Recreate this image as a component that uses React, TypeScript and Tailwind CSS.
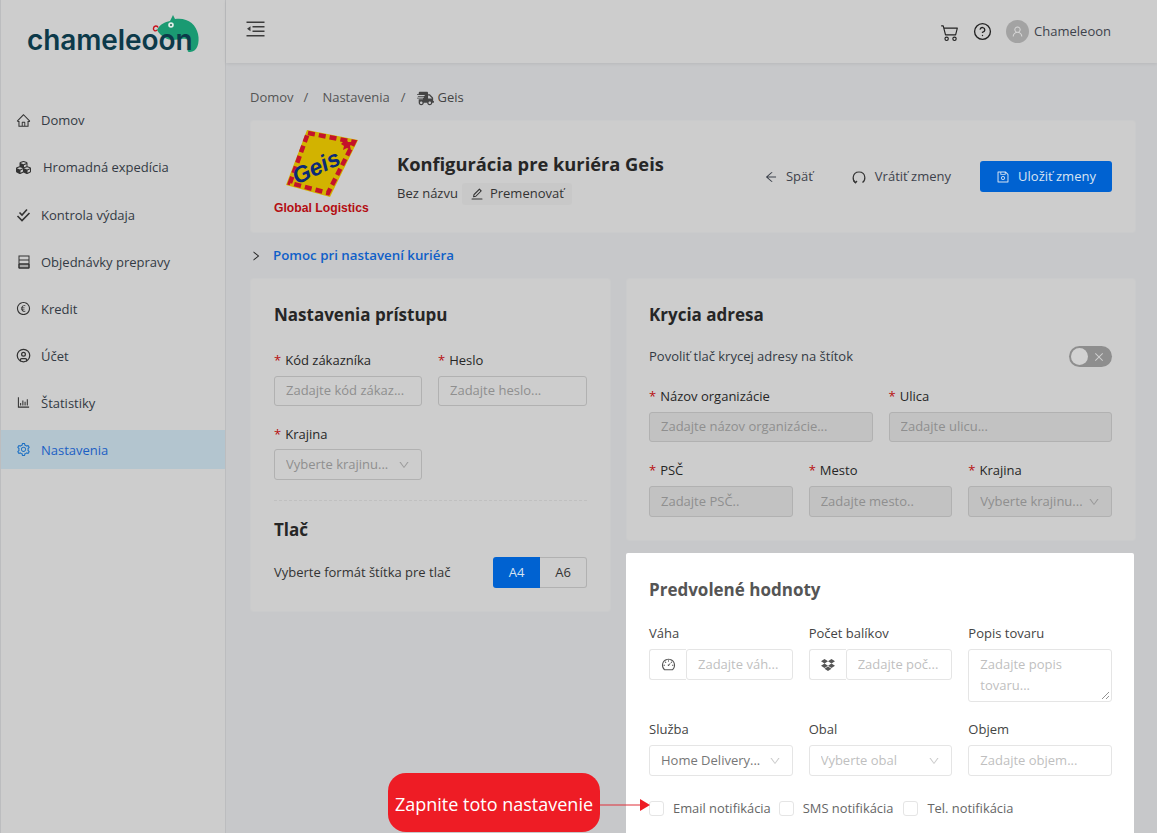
import type { ReactNode } from "react";
import {
  AiOutlineArrowLeft,
  AiOutlineBarChart,
  AiOutlineClose,
  AiOutlineDashboard,
  AiOutlineDown,
  AiOutlineEdit,
  AiOutlineEuroCircle,
  AiOutlineHome,
  AiOutlineRight,
  AiOutlineSave,
  AiOutlineSetting,
  AiOutlineUser,
} from "react-icons/ai";
import { BsCart2 } from "react-icons/bs";
import { FaCubes, FaDropbox, FaShippingFast } from "react-icons/fa";
import { LuCircleHelp, LuCircleUser } from "react-icons/lu";

function OrdersIcon() {
  return (
    <svg width="14" height="14" viewBox="0 0 14 14" fill="none" stroke="currentColor" strokeWidth="1">
      <rect x="2" y="1" width="10" height="12" />
      <path d="M2 5h10M2 9h10" />
      <path d="M2 9h10v4H2z" fill="currentColor" fillOpacity="0.25" />
    </svg>
  );
}

function ChecksIcon() {
  return (
    <svg width="15" height="14" viewBox="0 0 15 14" fill="none" stroke="currentColor" strokeWidth="1.6">
      <path d="M3.5 4.5L6 7L11 1.5" />
      <path d="M1.5 8L6 12.5L13.5 5" />
    </svg>
  );
}

const navItems: { label: string; icon: ReactNode; active?: boolean; cls: string }[] = [
  { label: "Domov", icon: <AiOutlineHome size={15} />, cls: "pt-px" },
  { label: "Hromadná expedícia", icon: <FaCubes size={17} />, cls: "ml-[2px] pt-px" },
  { label: "Kontrola výdaja", icon: <ChecksIcon />, cls: "pt-[2px]" },
  { label: "Objednávky prepravy", icon: <OrdersIcon />, cls: "pt-[2px]" },
  { label: "Kredit", icon: <AiOutlineEuroCircle size={15} />, cls: "pt-[2px]" },
  { label: "Účet", icon: <LuCircleUser size={15} />, cls: "pt-[2px]" },
  { label: "Štatistiky", icon: <AiOutlineBarChart size={15} />, cls: "pt-[2px]" },
  { label: "Nastavenia", icon: <AiOutlineSetting size={15} />, active: true, cls: "pt-[2px]" },
];

function Logo() {
  return (
    <div className="relative ml-[26px] mt-[22px] h-[36px] w-[180px]">
      <svg className="absolute left-[122px] top-[-8px]" width="54" height="42" viewBox="0 0 54 42">
        <path
          d="M8 16C11 10 16 8 21 7L24 1L26 5C38 3 47 10 49 20C51 29 48 38 41 38C38 38 38 36 40 34C42 31 42 27 37 25C32 24 29 26 24 26C19 26 12 23 8 16Z"
          fill="#1a9a72"
        />
        <circle cx="22" cy="11" r="2.8" fill="#dfeee8" />
        <circle cx="22" cy="11" r="1" fill="#1a6a52" />
        <path d="M8 16C6 18 4 16 4.5 14C5 11.5 8.5 11.5 9 13.5" fill="none" stroke="#c8101a" strokeWidth="1.4" />
      </svg>
      <span className="relative block font-['Inter',sans-serif] text-[28px] leading-[36px] font-semibold tracking-[-0.1px] text-[#0c3a4a]">
        chameleoon
      </span>
    </div>
  );
}

function Sidebar() {
  return (
    <aside className="flex h-full w-[226px] shrink-0 flex-col border-x border-[#bcbdbf] bg-[#cdcdcd]">
      <Logo />
      <nav className="mt-[43px] flex flex-col gap-2">
        {navItems.map((item) => (
          <div
            key={item.label}
            className={
              item.active
                ? "flex h-[39px] items-center gap-[10px] bg-[#b3c5cf] pl-[15px] text-[#1b5fc4]"
                : "flex h-[39px] items-center gap-[10px] pl-[15px] text-[#333a44]"
            }
          >
            <span className={item.active ? "flex w-[15px] justify-center text-[#1b6fc4]" : "flex w-[15px] justify-center text-[#333]"}>
              {item.icon}
            </span>
            <span className={`text-[13px] ${item.cls}`}>{item.label}</span>
          </div>
        ))}
      </nav>
    </aside>
  );
}

function Header() {
  return (
    <header className="flex h-[63px] shrink-0 items-start justify-between bg-[#cdcdcd] pl-5 pr-[46px] shadow-[0_1px_3px_rgba(0,0,0,0.08)]">
      <svg className="mt-[21px]" width="19" height="16" viewBox="0 0 19 16" fill="#3c3c3c">
        <path d="M0.5 0.5h18v1.5h-18zM6.5 5h12v1.5h-12zM6.5 9.5h12V11h-12zM0.5 14h18v1.5h-18zM4.5 5.2v5L1 7.7z" />
      </svg>
      <div className="mt-[20px] flex items-center text-[#222]">
        <BsCart2 size={18} className="mr-[14px]" />
        <LuCircleHelp size={19} strokeWidth={1.7} className="mr-[14px]" />
        <span className="mr-[5px] flex h-[23px] w-[23px] items-center justify-center rounded-full bg-[#a3a3a3] text-[#d8d8d8]">
          <AiOutlineUser size={13} />
        </span>
        <span className="text-[13px] text-[#3d424c]">Chameleoon</span>
      </div>
    </header>
  );
}

function GeisLogo() {
  return (
    <svg className="mb-2" width="105" height="95" viewBox="0 0 105 95">
      <polygon points="37,5 88,15 60,72 16,60" fill="#d2b300" />
      <polygon
        points="38,8 84,17 58,68 20,58"
        fill="none"
        stroke="#c4122a"
        strokeWidth="4.5"
        strokeDasharray="7 4"
      />
      <path d="M73 17l3-3 2 3 5 0-3 4 1 4-4-2-4 2 1-4-3-2z" fill="#c4122a" />
      <text
        x="46"
        y="50"
        textAnchor="middle"
        transform="rotate(-25 46 42)"
        fontFamily="Liberation Sans, sans-serif"
        fontSize="23"
        fontWeight="700"
        fontStyle="italic"
        fill="#0b2a78"
      >
        Geis
      </text>
      <text x="4" y="87" fontFamily="Liberation Sans, sans-serif" fontSize="12.2" fontWeight="700" fill="#b40d12">
        Global Logistics
      </text>
    </svg>
  );
}

type Tone = "dim" | "disabled" | "white";

const fieldTone: Record<Tone, string> = {
  dim: "border-[#b1b1b1] text-[#8f8f8f]",
  disabled: "border-[#b1b1b1] bg-[#c2c2c2] text-[#8f8f8f]",
  white: "border-[#e5e5e5] bg-white text-[#bfbfbf]",
};

function Label({ text, required, white }: { text: string; required?: boolean; white?: boolean }) {
  return (
    <div className={white ? "flex h-[22px] items-center pt-[2px] text-[13px] text-[#444]" : "flex h-[22px] items-center pt-[2px] text-[13px] text-[#262626]"}>
      {required && <span className="mr-[4px] text-[#b80f0f]">*</span>}
      {text}
    </div>
  );
}

function Field({ text, tone, select, h = "h-[31px]", valueColor }: { text: string; tone: Tone; select?: boolean; h?: string; valueColor?: string }) {
  return (
    <div className={`flex ${h} min-w-0 items-center justify-between rounded-[3px] border px-[11px] text-[13px] ${fieldTone[tone]}`}>
      <span className={`truncate ${valueColor ?? ""}`}>{text}</span>
      {select && <AiOutlineDown size={12} className="ml-1 shrink-0 opacity-80" />}
    </div>
  );
}

function CardTitle({ children, white }: { children: ReactNode; white?: boolean }) {
  return (
    <h2 className={white ? "text-[17px] leading-[26px] font-bold text-[#555]" : "text-[17px] leading-[26px] font-bold text-[#262626]"}>
      {children}
    </h2>
  );
}

function AccessCard() {
  return (
    <section className="rounded-[3px] border border-[#cacbcc] bg-[#cdcdcd] px-[23px] pt-[23px] pb-[23px]">
      <CardTitle>Nastavenia prístupu</CardTitle>
      <div className="mt-[21px] grid grid-cols-[148px_149px] gap-x-4">
        <div>
          <Label text="Kód zákazníka" required />
          <div className="mt-[5px]">
            <Field text="Zadajte kód zákaz..." tone="dim" h="h-[30px]" />
          </div>
        </div>
        <div>
          <Label text="Heslo" required />
          <div className="mt-[5px]">
            <Field text="Zadajte heslo..." tone="dim" h="h-[30px]" />
          </div>
        </div>
        <div className="mt-[17px]">
          <Label text="Krajina" required />
          <div className="mt-[4px]">
            <Field text="Vyberte krajinu..." tone="dim" select />
          </div>
        </div>
      </div>
      <div className="mt-5 border-t border-dashed border-[#c0c0c0]" />
      <div className="mt-4">
        <CardTitle>Tlač</CardTitle>
      </div>
      <div className="mt-[14px] flex items-center justify-between">
        <span className="text-[13px] text-[#333]">Vyberte formát štítka pre tlač</span>
        <div className="flex h-[31px] text-[13px]">
          <span className="flex w-[47px] items-center justify-center rounded-l-[3px] bg-[#0062d1] text-[#d8e4f2]">A4</span>
          <span className="flex w-[47px] items-center justify-center rounded-r-[3px] border border-l-0 border-[#b1b1b1] text-[#333]">A6</span>
        </div>
      </div>
    </section>
  );
}

function CoverCard() {
  return (
    <section className="rounded-[3px] border border-[#cacbcc] bg-[#cdcdcd] pt-[23px] pr-[23px] pb-[23px] pl-[22px]">
      <CardTitle>Krycia adresa</CardTitle>
      <div className="mt-[18px] flex h-[21px] items-center justify-between">
        <span className="text-[13px] text-[#333a44]">Povoliť tlač krycej adresy na štítok</span>
        <span className="flex h-[21px] w-[43px] items-center justify-between rounded-full bg-[#8e8e8e] pl-[2px] pr-[7px] text-[#cfcfcf]">
          <span className="h-[17px] w-[17px] rounded-full bg-[#d2d2d2]" />
          <AiOutlineClose size={12} />
        </span>
      </div>
      <div className="mt-[18px] grid grid-cols-2 gap-x-4">
        <div>
          <Label text="Názov organizácie" required />
          <div className="mt-[5px]">
            <Field text="Zadajte názov organizácie..." tone="disabled" h="h-[30px]" />
          </div>
        </div>
        <div>
          <Label text="Ulica" required />
          <div className="mt-[5px]">
            <Field text="Zadajte ulicu..." tone="disabled" h="h-[30px]" />
          </div>
        </div>
      </div>
      <div className="mt-[17px] grid grid-cols-3 gap-x-4">
        <div>
          <Label text="PSČ" required />
          <div className="mt-[5px]">
            <Field text="Zadajte PSČ.." tone="disabled" />
          </div>
        </div>
        <div>
          <Label text="Mesto" required />
          <div className="mt-[5px]">
            <Field text="Zadajte mesto.." tone="disabled" />
          </div>
        </div>
        <div>
          <Label text="Krajina" required />
          <div className="mt-[5px]">
            <Field text="Vyberte krajinu..." tone="disabled" select />
          </div>
        </div>
      </div>
    </section>
  );
}

function AddonField({ icon, text }: { icon: ReactNode; text: string }) {
  return (
    <div className="flex h-[31px] text-[13px] text-[#bfbfbf]">
      <span className="flex w-[37px] shrink-0 items-center justify-center rounded-l-[3px] border border-r-0 border-[#e5e5e5] text-[#555]">
        {icon}
      </span>
      <span className="flex min-w-0 flex-1 items-center rounded-[3px] border border-[#e5e5e5] px-[11px]">
        <span className="truncate">{text}</span>
      </span>
    </div>
  );
}

function Check({ label, spaced }: { label: string; spaced?: boolean }) {
  return (
    <div className={spaced ? "mr-[2px] flex h-4 items-center gap-[9px]" : "flex h-4 items-center gap-[9px]"}>
      <span className="h-[15px] w-[15px] rounded-[3px] border border-[#e5e5e5] bg-white" />
      <span className="pt-[2px] text-[12.9px] text-[#666]">{label}</span>
    </div>
  );
}

function DefaultsCard() {
  return (
    <section className="relative z-10 mt-3 mr-[2px] rounded-[2px] bg-white pt-6 pr-[22px] pb-6 pl-[23px]">
      <CardTitle white>Predvolené hodnoty</CardTitle>
      <div className="mt-[19px] grid grid-cols-3 gap-x-4">
        <div>
          <Label text="Váha" white />
          <div className="mt-[5px]">
            <AddonField icon={<AiOutlineDashboard size={15} />} text="Zadajte váh..." />
          </div>
        </div>
        <div>
          <Label text="Počet balíkov" white />
          <div className="mt-[5px]">
            <AddonField icon={<FaDropbox size={14} />} text="Zadajte poč..." />
          </div>
        </div>
        <div>
          <Label text="Popis tovaru" white />
          <div className="relative mt-[5px] h-[53px] rounded-[3px] border border-[#e5e5e5] px-[11px] py-1 text-[13px] leading-[21px] text-[#bfbfbf]">
            Zadajte popis tovaru...
            <svg className="absolute right-[1px] bottom-[1px]" width="9" height="9" viewBox="0 0 9 9" stroke="#777" strokeWidth="0.8">
              <path d="M1 8L8 1M5 8L8 5" />
            </svg>
          </div>
        </div>
      </div>
      <div className="mt-4 grid grid-cols-3 gap-x-4">
        <div>
          <Label text="Služba" white />
          <div className="mt-[5px]">
            <Field text="Home Delivery..." tone="white" select valueColor="text-[#777]" />
          </div>
        </div>
        <div>
          <Label text="Obal" white />
          <div className="mt-[5px]">
            <Field text="Vyberte obal" tone="white" select />
          </div>
        </div>
        <div>
          <Label text="Objem" white />
          <div className="mt-[5px]">
            <Field text="Zadajte objem..." tone="white" />
          </div>
        </div>
      </div>
      <div className="mt-6 flex gap-2">
        <Check label="Email notifikácia" />
        <Check label="SMS notifikácia" spaced />
        <Check label="Tel. notifikácia" />
      </div>
    </section>
  );
}

export default function App() {
  return (
    <div className="relative flex h-[833px] w-[1157px] overflow-hidden bg-[#c7c8ca] font-['Open_Sans',sans-serif]">
      <Sidebar />
      <div className="flex min-w-0 flex-1 flex-col">
        <Header />
        <main className="pl-6 pr-[21px]">
          <div className="mt-[25px] flex h-5 items-center text-[13px] text-[#555]">
            <span>Domov</span>
            <span className="mr-[14px] ml-[10px]">/</span>
            <span>Nastavenia</span>
            <span className="mr-[11px] ml-[11px]">/</span>
            <FaShippingFast size={17} className="mr-1 text-[#444]" />
            <span className="text-[#444]">Geis</span>
          </div>
          <section className="mt-3 flex h-[113px] items-center justify-between rounded-[3px] border border-[#cacbcc] bg-[#cdcdcd] pr-[23px] pl-[19px]">
            <div className="flex items-center">
              <GeisLogo />
              <div className="ml-[22px] pt-[3px]">
                <h1 className="text-[18.3px] leading-[26px] font-bold text-[#262626]">Konfigurácia pre kuriéra Geis</h1>
                <div className="mt-[6px] flex items-center text-[13px] text-[#333]">
                  <span>Bez názvu</span>
                  <span className="ml-1 flex h-[22px] items-center gap-[6px] rounded-[3px] bg-[#c8c8c8] px-2">
                    <AiOutlineEdit size={14} />
                    Premenovať
                  </span>
                </div>
              </div>
            </div>
            <div className="flex items-center text-[13px] text-[#3d424c]">
              <AiOutlineArrowLeft size={14} className="mr-[8px]" />
              <span>Späť</span>
              <svg className="mr-[9px] ml-[39px]" width="14" height="14" viewBox="0 0 14 14" fill="none" stroke="#333" strokeWidth="1.2">
                <path d="M3.5 12.5C1.5 11 1 9 1.2 7.2C1.6 4 4 2 7 2C10 2 12.5 4 12.8 7.2C13 9 12.5 11 10.5 12.5" />
                <path d="M1.5 10.5L3.5 12.8L5 11" />
              </svg>
              <span>Vrátiť zmeny</span>
              <span className="ml-[29px] flex h-[31px] w-[132px] items-center justify-center gap-[8px] rounded-[3px] bg-[#0062d1] text-[#d8e4f2]">
                <AiOutlineSave size={14} />
                Uložiť zmeny
              </span>
            </div>
          </section>
          <div className="mt-[13px] flex h-5 items-center text-[13.3px] font-semibold text-[#0f5fc8]">
            <AiOutlineRight size={12} className="mr-[11px] text-[#222]" />
            Pomoc pri nastavení kuriéra
          </div>
          <div className="mt-3 grid grid-cols-[361px_510px] items-start gap-x-[15px]">
            <AccessCard />
            <div>
              <CoverCard />
              <DefaultsCard />
            </div>
          </div>
        </main>
      </div>
      <div className="absolute top-[773px] left-[388px] flex h-[59px] w-[212px] items-center justify-center rounded-[18px] bg-[#ee1c25] pt-[3px] text-[18px] text-white">
        Zapnite toto nastavenie
      </div>
      <svg className="absolute top-[798px] left-[600px] z-20" width="50" height="14" viewBox="0 0 50 14">
        <path d="M0 7H41" stroke="#e0303a" strokeWidth="1.2" />
        <path d="M40 1L50 7L40 13Z" fill="#ee1c25" />
      </svg>
    </div>
  );
}
